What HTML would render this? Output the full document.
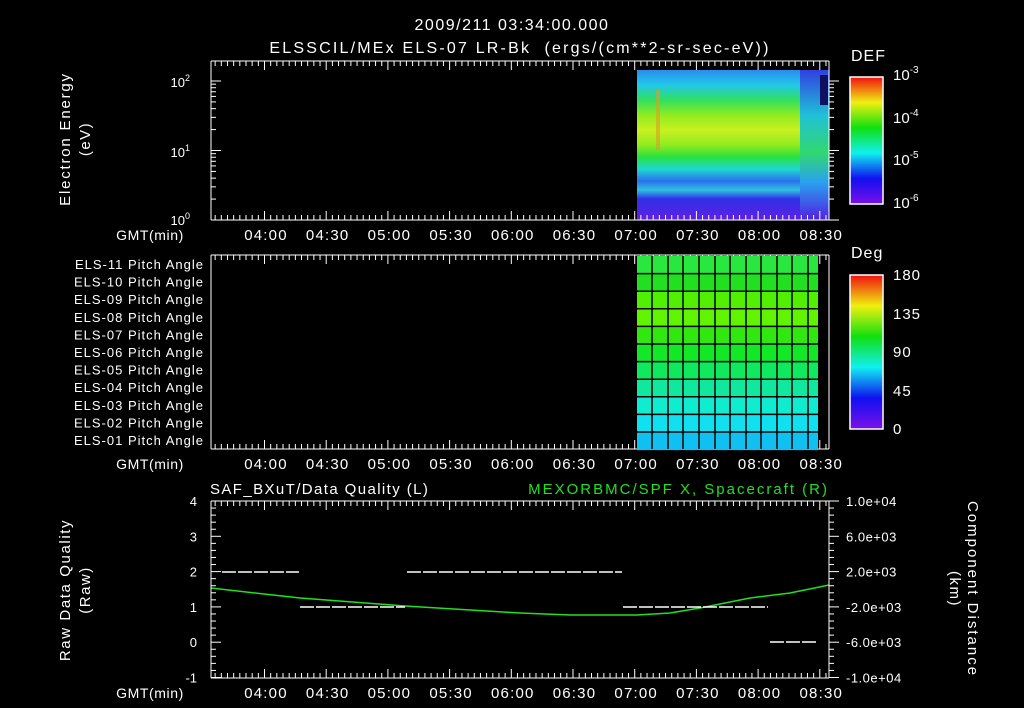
<!DOCTYPE html>
<html><head><meta charset="utf-8"><style>
html,body{margin:0;padding:0;background:#000;}
svg{display:block}
text{font-family:"Liberation Sans","DejaVu Sans",sans-serif;fill:#fff}
</style></head><body>
<svg id="s" width="1024" height="708" viewBox="0 0 1024 708" xmlns="http://www.w3.org/2000/svg">
<defs>
<linearGradient id="spec" x1="0" y1="0" x2="0" y2="1">
<stop offset="0" stop-color="#2a8cf0"/>
<stop offset="0.1" stop-color="#22c8e8"/>
<stop offset="0.2" stop-color="#30e060"/>
<stop offset="0.3" stop-color="#90ec20"/>
<stop offset="0.4" stop-color="#c8f020"/>
<stop offset="0.5" stop-color="#90ec20"/>
<stop offset="0.58" stop-color="#28e040"/>
<stop offset="0.66" stop-color="#20d8d0"/>
<stop offset="0.74" stop-color="#2a70f0"/>
<stop offset="0.8" stop-color="#30c0e0"/>
<stop offset="0.86" stop-color="#3030e8"/>
<stop offset="1" stop-color="#6020e0"/>
</linearGradient>
<linearGradient id="spec2" x1="0" y1="0" x2="0" y2="1">
<stop offset="0" stop-color="#3040e0"/>
<stop offset="0.3" stop-color="#20c0d8"/>
<stop offset="0.55" stop-color="#30d870"/>
<stop offset="0.75" stop-color="#2aa0f0"/>
<stop offset="1" stop-color="#5020e0"/>
</linearGradient>
<linearGradient id="cb1" x1="0" y1="1" x2="0" y2="0">
<stop offset="0" stop-color="#7a10e8"/>
<stop offset="0.2" stop-color="#1010f0"/>
<stop offset="0.4" stop-color="#10f0f0"/>
<stop offset="0.6" stop-color="#10e010"/>
<stop offset="0.8" stop-color="#f0f010"/>
<stop offset="0.9" stop-color="#f08010"/>
<stop offset="1" stop-color="#f01010"/>
</linearGradient>
</defs>
<text x="512" y="30" font-size="16" text-anchor="middle" letter-spacing="1.5">2009/211 03:34:00.000</text>
<text x="520" y="53" font-size="16" text-anchor="middle" letter-spacing="2.2" xml:space="preserve">ELSSCIL/MEx ELS-07 LR-Bk  (ergs/(cm**2-sr-sec-eV))</text>

<!-- panel 1 -->
<rect x="637" y="70" width="192" height="150" fill="url(#spec)"/>
<rect x="800" y="70" width="29" height="150" fill="url(#spec2)"/>
<rect x="656" y="90" width="4" height="60" fill="#d8a020" opacity="0.6"/>
<rect x="820" y="75" width="8" height="30" fill="#101060"/>
<g id="p1"></g>
<text x="190" y="87" font-size="13" text-anchor="end">10<tspan dy="-6" font-size="9">2</tspan></text>
<text x="190" y="157" font-size="13" text-anchor="end">10<tspan dy="-6" font-size="9">1</tspan></text>
<text x="190" y="225" font-size="13" text-anchor="end">10<tspan dy="-6" font-size="9">0</tspan></text>
<text transform="translate(70,139) rotate(-90)" font-size="15" text-anchor="middle" letter-spacing="1.8">Electron Energy</text>
<text transform="translate(90,139) rotate(-90)" font-size="15" text-anchor="middle" letter-spacing="1.5">(eV)</text>
<rect x="850" y="77" width="33" height="127" fill="url(#cb1)" stroke="#fff" stroke-width="1.5"/>
<text x="851" y="61" font-size="16" letter-spacing="1">DEF</text>
<text x="893" y="80" font-size="15">10<tspan dy="-7" font-size="10">-3</tspan></text>
<text x="893" y="123" font-size="15">10<tspan dy="-7" font-size="10">-4</tspan></text>
<text x="893" y="165" font-size="15">10<tspan dy="-7" font-size="10">-5</tspan></text>
<text x="893" y="208" font-size="15">10<tspan dy="-7" font-size="10">-6</tspan></text>

<!-- panel 2 -->
<g id="pa"></g>
<rect x="850" y="275" width="33" height="154" fill="url(#cb1)" stroke="#fff" stroke-width="1.5"/>
<text x="851" y="258" font-size="16" letter-spacing="1">Deg</text>
<text x="893" y="280" font-size="15" letter-spacing="1">180</text>
<text x="893" y="319" font-size="15" letter-spacing="1">135</text>
<text x="893" y="357" font-size="15" letter-spacing="1">90</text>
<text x="893" y="396" font-size="15" letter-spacing="1">45</text>
<text x="893" y="434" font-size="15" letter-spacing="1">0</text>

<!-- panel 3 -->
<text x="210" y="494" font-size="15" letter-spacing="1.4">SAF_BXuT/Data Quality (L)</text>
<text x="829" y="494" font-size="15" text-anchor="end" letter-spacing="2" style="fill:#20e020">MEXORBMC/SPF X, Spacecraft (R)</text>
<g id="p3"></g>
<polyline fill="none" stroke="#20e020" stroke-width="1.5" points="211,588 300,598 405,606 520,613 570,615 637,615 670,613 700,608 730,602 750,598 790,593 829,585"/>
<text transform="translate(70,590) rotate(-90)" font-size="15" text-anchor="middle" letter-spacing="1.6">Raw Data Quality</text>
<text transform="translate(90,590) rotate(-90)" font-size="15" text-anchor="middle" letter-spacing="1.5">(Raw)</text>
<text transform="translate(968,589) rotate(90)" font-size="15" text-anchor="middle" letter-spacing="2">Component Distance</text>
<text transform="translate(950,589) rotate(90)" font-size="15" text-anchor="middle" letter-spacing="1.5">(km)</text>
</svg>
<script>
var S=document.getElementById('s'),NS='http://www.w3.org/2000/svg';
function el(t,a,p){var e=document.createElementNS(NS,t);for(var k in a)e.setAttribute(k,a[k]);(p||S).appendChild(e);return e;}
function line(x1,y1,x2,y2,c,w,d){var a={x1:x1,y1:y1,x2:x2,y2:y2,stroke:c||'#fff','stroke-width':w||1};if(d)a['stroke-dasharray']=d;el('line',a);}
function txt(x,y,s,sz,anc,ls){var e=el('text',{x:x,y:y,'font-size':sz||13,'text-anchor':anc||'middle'});if(ls)e.setAttribute('letter-spacing',ls);e.textContent=s;}
var L=211,R=829;
function X(t){return 264+(t-240)*61.7/30;}
function timeAxis(top,bot){
 line(L,top,R,top);line(L,bot,R,bot);line(L,top,L,bot);line(R,top,R,bot);
 for(var t=216;t<=514;t+=3){var x=X(t)+0.5;var maj=(t%30==0);var h=maj?9:5;
  line(x,top,x,top+h);line(x,bot,x,bot-h);}
 var labs=['04:00','04:30','05:00','05:30','06:00','06:30','07:00','07:30','08:00','08:30'];
 for(var i=0;i<labs.length;i++)txt(X(240+30*i)+2,bot+20,labs[i],15,'middle',1.2);
 txt(150,bot+20,'GMT(min)',14,'middle',0.6);
}
timeAxis(61,220);
var dec=69.5;
for(var d=0;d<3;d++)for(var m=1;m<10;m++){var y=220-dec*(d+Math.log10(m));if(y<61)continue;var h=(m==1)?10:5;line(L,y,L+h,y);line(R,y,R+h,y);}
timeAxis(255,449);
var cols=['#28e840','#20e020','#50f000','#60f400','#30e810','#10e828','#10e860','#10e8a0','#10ecd0','#10e0f0','#10c0f0'];
var rt=256,rh=17.6;
for(var i=0;i<11;i++){el('rect',{x:637,y:rt+i*rh,width:181,height:rh+0.5,fill:cols[i]});}
for(var i=1;i<11;i++){line(637,rt+i*rh,818,rt+i*rh,'#000',1.5);}
var cx=[652,668,683,699,715,730,746,761,777,792,808];
for(var i=0;i<cx.length;i++)line(cx[i],256,cx[i],449,'#000',1.5);
var nm=['11','10','09','08','07','06','05','04','03','02','01'];
for(var i=0;i<11;i++)txt(204,rt+i*rh+13,'ELS-'+nm[i]+' Pitch Angle',13,'end',1);
timeAxis(501,678);
var s3=35.3;
for(var v=0;v<=25;v++){var y=501+v*s3/5;var maj=(v%5==0);var h=maj?10:5;line(L,y,L+h,y);line(R,y,R+h,y);}
var ly=['4','3','2','1','0','-1'],ry=['1.0e+04','6.0e+03','2.0e+03','-2.0e+03','-6.0e+03','-1.0e+04'];
for(var i=0;i<6;i++){var y=501+i*s3+5;txt(197,y,ly[i],13,'end');txt(846,y,ry[i],13,'start',0.5);}
function seg(x1,x2,y){line(x1,y,x2,y,'#fff',1.5,'14 2');}
seg(222,299,572);seg(300,405,607);seg(407,622,572);seg(623,768,607);seg(770,816,642);
</script>
</body></html>
